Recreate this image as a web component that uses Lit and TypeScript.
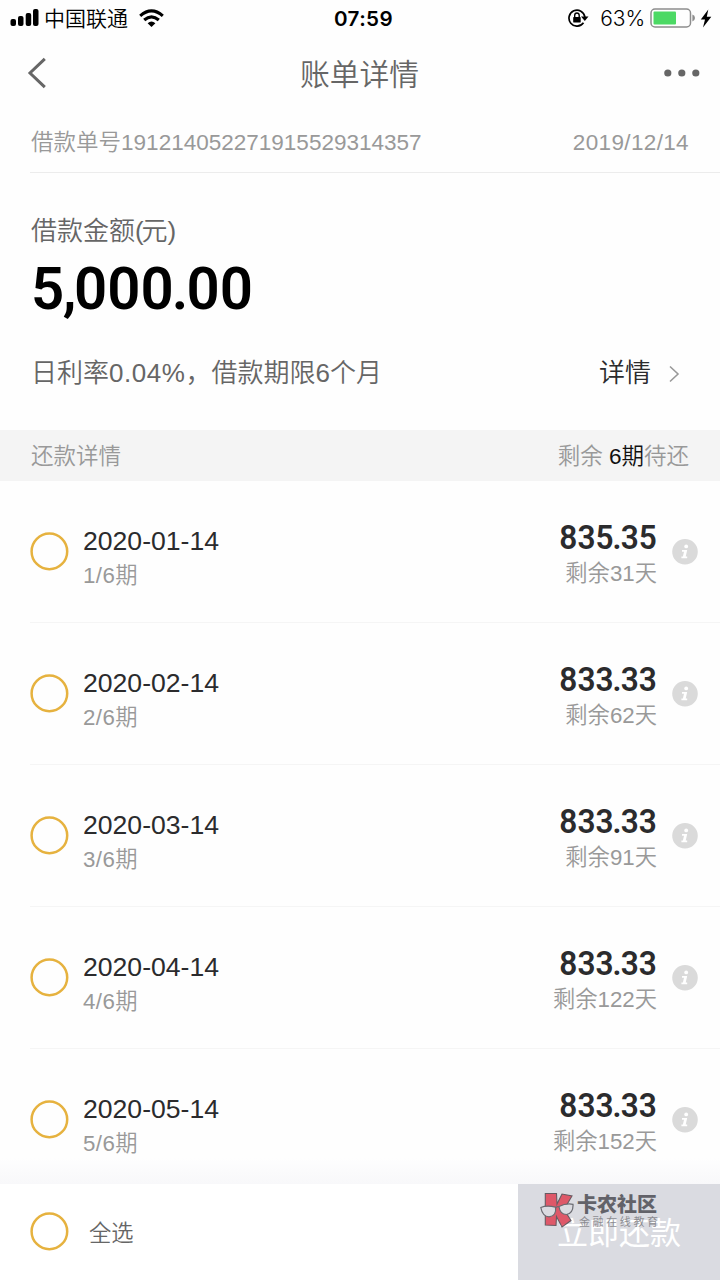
import { LitElement, html, css } from "lit";
import { customElement, property } from "lit/decorators.js";

interface Installment {
  date: string;
  index: number;
  amount: string;
  days: number;
}

const ITEMS: Installment[] = [
  { date: "2020-01-14", index: 1, amount: "835.35", days: 31 },
  { date: "2020-02-14", index: 2, amount: "833.33", days: 62 },
  { date: "2020-03-14", index: 3, amount: "833.33", days: 91 },
  { date: "2020-04-14", index: 4, amount: "833.33", days: 122 },
  { date: "2020-05-14", index: 5, amount: "833.33", days: 152 },
];

const radio = () => html`
  <svg class="radio" width="39" height="39" viewBox="0 0 39 39">
    <circle cx="19.4" cy="19.4" r="17.8" fill="none" stroke="#e6b23f" stroke-width="2.5"/>
  </svg>`;

@customElement("status-bar")
class StatusBar extends LitElement {
  static styles = css`
    :host { display: flex; align-items: center; height: 36px; color: #000; font-family: "Inter", "Noto Sans CJK SC", sans-serif; }
    svg { display: block; flex: none; }
    .signal { margin-left: 10px; }
    .carrier { margin-left: 5px; font: 350 21px/34px "Noto Sans CJK SC", sans-serif; padding-bottom: 2px; }
    .wifi { margin-left: 11px; }
    .time { flex: 1; padding-left: 170px; font-size: 20.6px; font-weight: 600; letter-spacing: 0.4px; line-height: 37px; }
    .lock { margin-right: 11px; }
    .pct { font-size: 21px; line-height: 37px; letter-spacing: -0.1px; margin-right: 5px; }
    .bolt { margin: 0 8px 0 5px; }
  `;
  render() {
    return html`
      <svg class="signal" width="29" height="18" viewBox="0 0 29 18">
        <rect x="0.5" y="10" width="5.5" height="7" rx="2"/><rect x="8" y="7" width="5.5" height="10" rx="2"/>
        <rect x="15.7" y="4" width="5.5" height="13" rx="2"/><rect x="23" y="0" width="5.5" height="17" rx="2"/>
      </svg>
      <span class="carrier">中国联通</span>
      <svg class="wifi" width="25" height="19" viewBox="0 0 25 19" fill="none" stroke="#000" stroke-width="3.1">
        <path d="M1.2 6.8Q12.5-3.1 23.8 6.8"/><path d="M5.2 11Q12.5 4.6 19.8 11"/>
        <path d="M8.6 14.3Q12.5 10.7 16.4 14.3L12.5 18Z" fill="#000" stroke="none"/>
      </svg>
      <span class="time">07:59</span>
      <svg class="lock" width="21" height="18" viewBox="0 0 21 18">
        <path d="M15.5 13.8A8 8 0 1 1 16.9 8" fill="none" stroke="#000" stroke-width="1.7"/>
        <path d="M13 7.6H20.5L16.8 12Z"/>
        <rect x="5.2" y="8" width="7.5" height="5.6" rx="0.7"/>
        <path d="M6.7 8.3V6.2a2.25 2.25 0 0 1 4.5 0V8.3" fill="none" stroke="#000" stroke-width="1.4"/>
      </svg>
      <span class="pct">63%</span>
      <svg width="45" height="20" viewBox="0 0 45 20">
        <rect x="1" y="1" width="39.5" height="18" rx="4" fill="none" stroke="#8d8d8d" stroke-width="1.5"/>
        <rect x="3.5" y="3.6" width="22.5" height="12.8" rx="1" fill="#4cd964"/>
        <path d="M42.4 6.6Q45 7.6 45 10T42.4 13.4Z" fill="#8d8d8d"/>
      </svg>
      <svg class="bolt" width="12" height="19" viewBox="0 0 12 19"><path d="M8.3 0.5L0.8 10.6H5L3 18.4L11.3 7.8H6.8Z"/></svg>
    `;
  }
}

@customElement("installment-row")
class InstallmentRow extends LitElement {
  @property({ attribute: false }) item!: Installment;
  static styles = css`
    :host { display: flex; align-items: flex-start; box-sizing: border-box; height: 142px; margin-left: 30px; padding-right: 22px; border-bottom: 1px solid #f5f5f5; }
    .radio { flex: none; display: block; margin-top: 51px; }
    .left { flex: 1; margin-left: 14px; padding-top: 43px; }
    .right { padding-top: 38px; text-align: right; }
    .date { font-size: 26.6px; line-height: 34px; color: #2b2b2d; }
    .sub { font-size: 22.3px; line-height: 34px; color: #999; }
    .left .sub { letter-spacing: 0.4px; padding-top: 1px; }
    .right .sub { padding-top: 2px; }
    .amount { height: 36px; font: 600 34px/36px Roboto, sans-serif; color: #2b2b2d; transform: scaleX(0.93); transform-origin: right; }
    .dot { margin: 0 -1px; }
    .info { flex: none; margin: 58px 0 0 15px; display: block; }
  `;
  render() {
    const { date, index, amount, days } = this.item;
    const [whole, cents] = amount.split(".");
    return html`
      ${radio()}
      <div class="left"><div class="date">${date}</div><div class="sub">${index}/6期</div></div>
      <div class="right">
        <div class="amount">${whole}<span class="dot">.</span>${cents}</div>
        <div class="sub">剩余${days}天</div>
      </div>
      <svg class="info" width="26" height="26" viewBox="0 0 26 26">
        <circle cx="13" cy="12.8" r="12.8" fill="#dadada"/>
        <circle cx="14.2" cy="7.4" r="1.9" fill="#fff"/>
        <path d="M10 11H15.2L13.7 17.6H15.2V19.2H9.4V17.6H10.9L12 12.7H10Z" fill="#fff"/>
      </svg>
    `;
  }
}

@customElement("brand-mark")
class BrandMark extends LitElement {
  static styles = css`
    :host { display: flex; width: 120px; height: 36px; opacity: 0.8; }
    svg { display: block; flex: none; }
    .words { margin-left: 3px; color: #45454c; }
    .name { display: block; white-space: nowrap; padding-top: 1px; font: 900 20px/22px "Noto Sans CJK SC", sans-serif; }
    .tag { display: block; white-space: nowrap; margin-top: -1px; padding-left: 2px; font: 400 11px/14px "Noto Sans CJK SC", sans-serif; letter-spacing: 2.6px; color: #77777c; }
  `;
  render() {
    return html`
      <svg width="34" height="36" viewBox="0 0 34 36">
        <path d="M5.300 1.500H16.500L17 12L22 2L32 4L24 17.500L31 28.500L22 35L16.500 24.500L16 33.500L5.300 33Z" fill="#e0384c" stroke="#4b3b42" stroke-width="1.1"/>
        <path d="M0.800 15.500Q7 13 15.500 15.200Q16.800 24 9 24.800Q2.500 24.500 0.800 15.500Z" fill="#dcdce2" stroke="#4f4f56" stroke-width="1.2"/>
        <path d="M19 14.500Q26 11 33 12.300Q33.500 21 26.500 22.500Q20 22.500 19 14.500Z" fill="#dcdce2" stroke="#4f4f56" stroke-width="1.2"/>
        <path d="M15.500 16Q17 14 19 15" fill="none" stroke="#4f4f56" stroke-width="1.3"/>
      </svg>
      <span class="words"><span class="name">卡农社区</span><span class="tag">金融在线教育</span></span>
    `;
  }
}

@customElement("app-root")
class AppRoot extends LitElement {
  static styles = css`
    :host { display: flex; flex-direction: column; width: 720px; height: 1280px; overflow: hidden; background: #fefefe; font-family: "Liberation Sans", "Noto Sans CJK SC", sans-serif; font-weight: 350; color: #666; }
    svg { display: block; flex: none; }
    .nav { flex: none; display: grid; grid-template-columns: 100px 1fr 100px; align-items: center; height: 74px; padding: 0 20px 0 27px; }
    .title { text-align: center; font-size: 29.8px; line-height: 44px; padding: 4px 8px 0 0; }
    .more { justify-self: end; }
    .order { flex: none; box-sizing: border-box; display: flex; justify-content: space-between; height: 63px; margin-left: 30px; padding: 17px 31px 0 1px; border-bottom: 1px solid #ececec; font-size: 22.53px; line-height: 32px; color: #999; }
    .odate { letter-spacing: 0.35px; }
    .summary { flex: none; height: 257px; box-sizing: border-box; padding: 39px 40px 0 31px; }
    .label { font-size: 26px; line-height: 38px; }
    .paren { letter-spacing: -2.2px; }
    .total { height: 70px; margin-top: 4px; font: 600 60px/70px Roboto, sans-serif; color: #000; transform: scaleX(0.97); transform-origin: left; }
    .comma { margin: 0 -2.5px 0 -1.5px; }
    .point { margin: 0 -2px; }
    .terms { display: flex; align-items: center; justify-content: space-between; margin-top: 30px; font-size: 26px; line-height: 38px; }
    .rate { letter-spacing: 0.55px; }
    .link { display: flex; align-items: center; gap: 17px; color: #2b2b2d; }
    .link svg { margin-top: 1px; }
    .band { flex: none; display: flex; justify-content: space-between; height: 51px; padding: 0 31px 0 31px; background: #f4f4f4; font-size: 22.5px; line-height: 53px; color: #999; }
    .left-count { color: #111; }
    .list { flex: 1; min-height: 0; overflow: hidden; position: relative; }
    .list::after { content: ""; position: absolute; left: 0; right: 0; bottom: 0; height: 26px; background: linear-gradient(rgba(247,247,250,0), #f8f8fa); }
    .footer { flex: none; display: flex; height: 96px; background: #fff; }
    .all { flex: 1; display: flex; align-items: center; gap: 20px; padding: 0 0 0 30px; font-size: 22.3px; line-height: 32px; }
    .all .radio { margin-top: -1px; }
    .all span { padding-top: 3px; }
    .pay { position: relative; width: 202px; background: #dadbe1; text-align: center; color: #fff; font-size: 31px; font-weight: 400; line-height: 99px; }
    brand-mark { position: absolute; left: 22px; top: 8px; text-align: left; }
  `;
  render() {
    return html`
      <status-bar></status-bar>
      <div class="nav">
        <svg width="20" height="32" viewBox="0 0 20 32"><path d="M17.8 1.8L3 16L17.8 30.2" fill="none" stroke="#666" stroke-width="3"/></svg>
        <div class="title">账单详情</div>
        <svg class="more" width="36" height="8" viewBox="0 0 36 8" fill="#666"><circle cx="3.8" cy="4" r="3.6"/><circle cx="17.8" cy="4" r="3.6"/><circle cx="31.8" cy="4" r="3.6"/></svg>
      </div>
      <div class="order"><span>借款单号191214052271915529314357</span><span class="odate">2019/12/14</span></div>
      <div class="summary">
        <div class="label">借款金额<span class="paren">(</span>元<span class="paren">)</span></div>
        <div class="total">5<span class="comma">,</span>000<span class="point">.</span>00</div>
        <div class="terms">
          <span>日利率<span class="rate">0.04%</span>，借款期限6个月</span>
          <span class="link">详情<svg width="12" height="18" viewBox="0 0 12 18"><path d="M2 1.5L10 9L2 16.5" fill="none" stroke="#999" stroke-width="1.6"/></svg></span>
        </div>
      </div>
      <div class="band"><span>还款详情</span><span>剩余 <span class="left-count">6期</span>待还</span></div>
      <div class="list">${ITEMS.map((item) => html`<installment-row .item=${item}></installment-row>`)}</div>
      <div class="footer">
        <div class="all">${radio()}<span>全选</span></div>
        <div class="pay">立即还款<brand-mark></brand-mark></div>
      </div>
    `;
  }
}
